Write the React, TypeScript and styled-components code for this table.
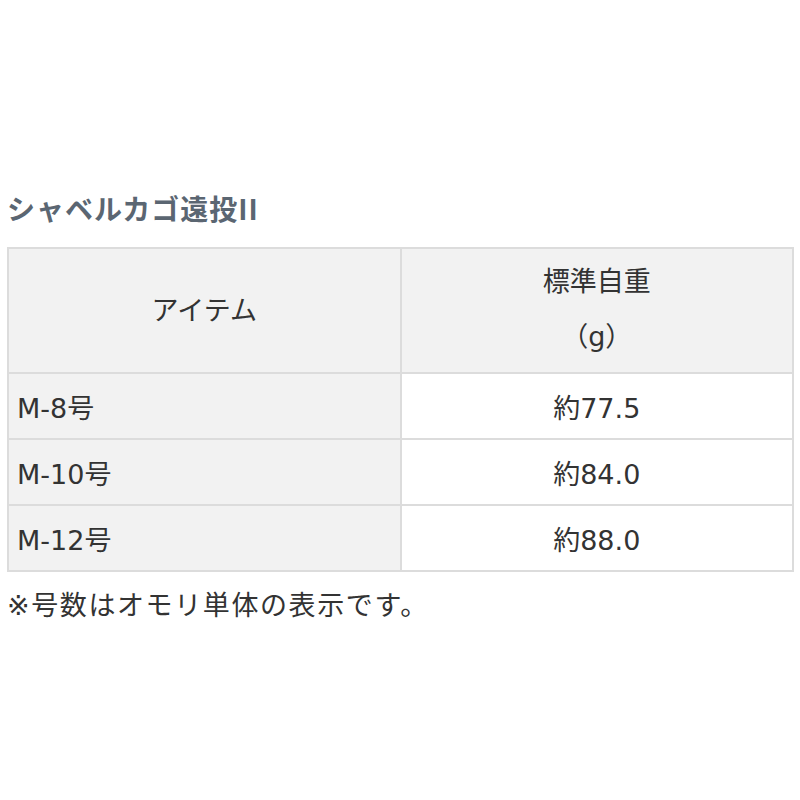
import styled, { createGlobalStyle } from "styled-components";

const GlobalStyle = createGlobalStyle`
  body {
    margin: 0;
    background: #fff;
    font-family: "DejaVu Sans", "Noto Sans CJK JP", sans-serif;
    color: #333;
  }
`;

interface Row {
  item: string;
  weight: string;
}

const rows: Row[] = [
  { item: "M-8号", weight: "約77.5" },
  { item: "M-10号", weight: "約84.0" },
  { item: "M-12号", weight: "約88.0" },
];

const App = () => {
  return (
    <>
      <GlobalStyle />
      <Page>
        <Title>シャベルカゴ遠投II</Title>
        <SpecTable>
          <thead>
            <tr>
              <HeadCell>アイテム</HeadCell>
              <HeadCell>
                <HeadLine>標準自重</HeadLine>
                <HeadLine>（g）</HeadLine>
              </HeadCell>
            </tr>
          </thead>
          <tbody>
            {rows.map((row) => (
              <tr key={row.item}>
                <ItemCell>{row.item}</ItemCell>
                <ValueCell>{row.weight}</ValueCell>
              </tr>
            ))}
          </tbody>
        </SpecTable>
        <Note>※号数はオモリ単体の表示です。</Note>
      </Page>
    </>
  );
};

export default App;

const Page = styled.div`
  padding: 190px 6px 0 7px;
`;

const Title = styled.h2`
  margin: 0 0 21px 0;
  font-family: "Noto Sans CJK JP", sans-serif;
  font-size: 28px;
  font-weight: bold;
  line-height: 36px;
  letter-spacing: 1px;
  color: #5b6672;
`;

const SpecTable = styled.table`
  width: 100%;
  border-collapse: collapse;
  table-layout: fixed;
  font-size: 27px;
  color: #333;
`;

const HeadCell = styled.th`
  height: 119px;
  padding: 0 0 4px;
  border: 2px solid #dcdcdc;
  background: #f2f2f2;
  font-weight: normal;
  text-align: center;
  vertical-align: middle;
`;

const HeadLine = styled.div`
  line-height: 55px;
`;

const ItemCell = styled.td`
  height: 64px;
  padding: 0 0 0 8px;
  border: 2px solid #dcdcdc;
  background: #f2f2f2;
  text-align: left;
`;

const ValueCell = styled.td`
  height: 64px;
  padding: 0;
  border: 2px solid #dcdcdc;
  background: #fff;
  text-align: center;
`;

const Note = styled.p`
  margin: 16px 0 0 0;
  font-size: 27px;
  line-height: 36px;
  letter-spacing: 1.6px;
  color: #333;
`;
